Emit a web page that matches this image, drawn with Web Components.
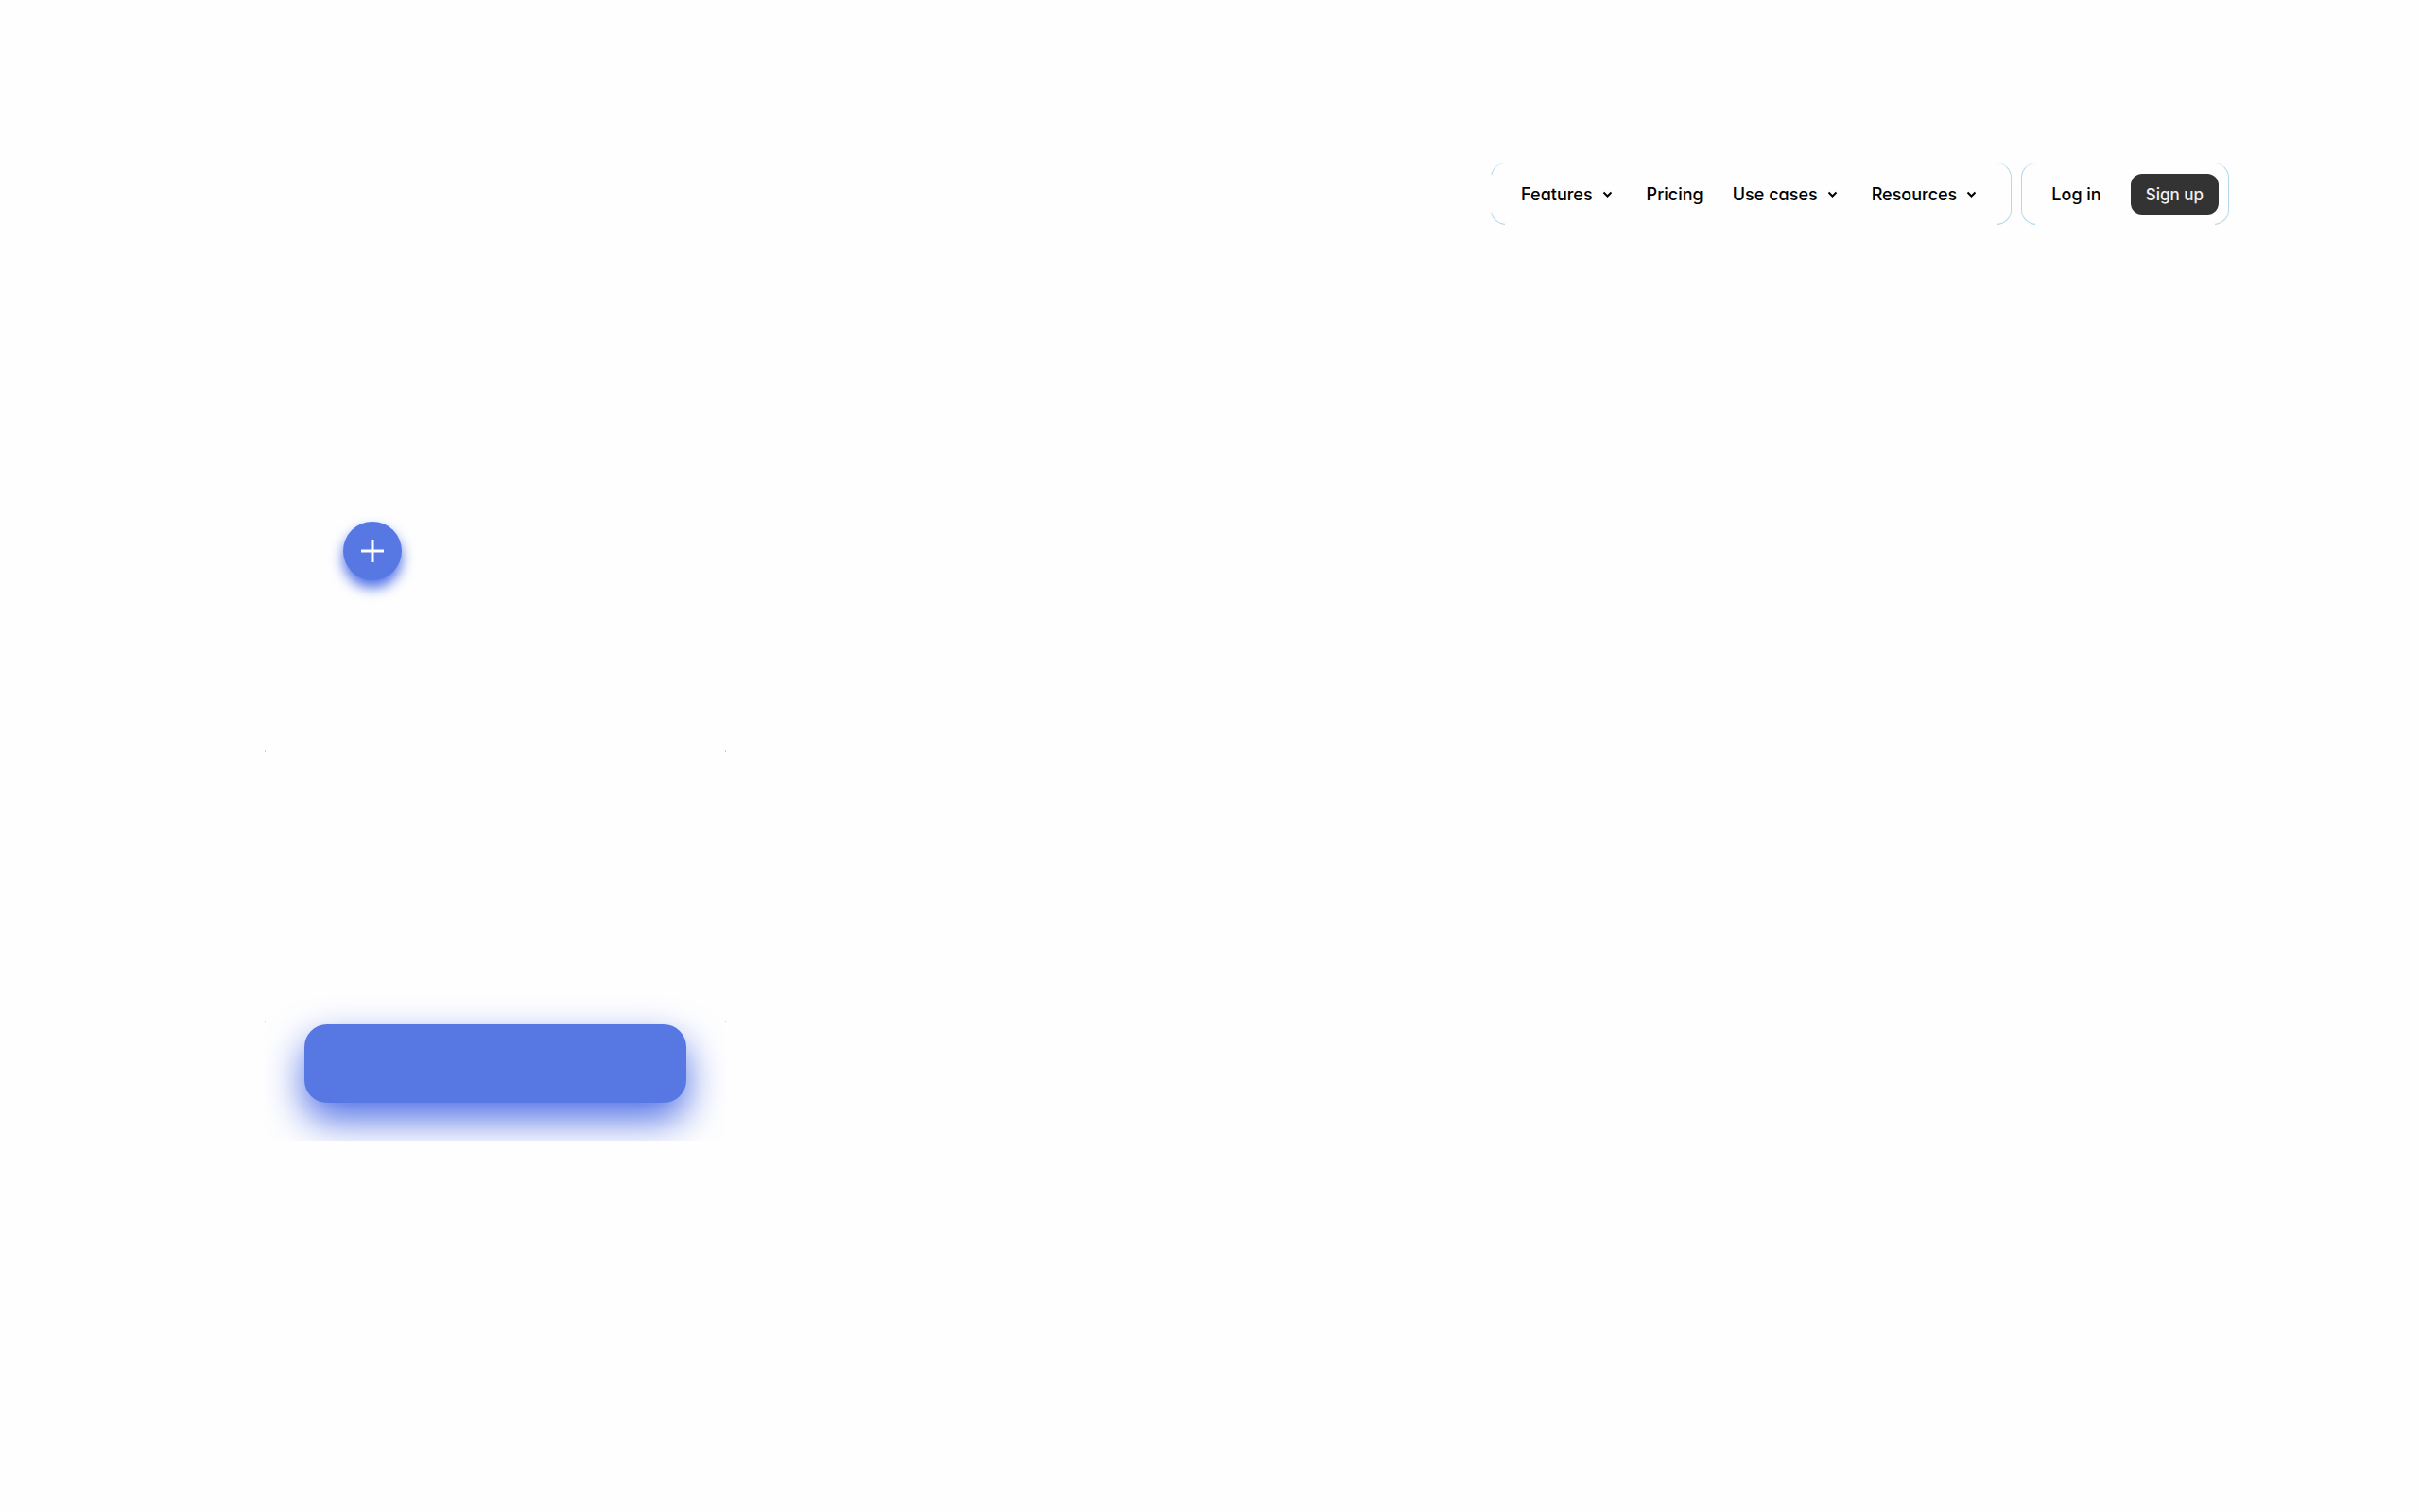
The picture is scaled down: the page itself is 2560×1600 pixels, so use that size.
<!DOCTYPE html>
<html lang="en">
<head>
<meta charset="utf-8">
<title>Home</title>
<style>
    body {
        margin: 0;
        background: #fefefe;
        color: #000;
        font-family: Inter, "Liberation Sans", sans-serif;
        font-size: 18px;
        font-weight: 500;
        line-height: 24px;
        font-feature-settings: "cv11";
    }
</style>
</head>
<body>
<site-header>
    <nav-group class="open-start" aria-label="Main">
        <nav-item menu>Features</nav-item>
        <nav-item>Pricing</nav-item>
        <nav-item menu>Use cases</nav-item>
        <nav-item menu>Resources</nav-item>
    </nav-group>
    <nav-group class="account" aria-label="Account">
        <nav-item>Log in</nav-item>
        <sign-button>Sign up</sign-button>
    </nav-group>
</site-header>
<hero-panel>
    <add-button slot="top"></add-button>
    <action-card></action-card>
</hero-panel>

<script>
class SiteHeader extends HTMLElement {
    constructor() {
        super();
        this.attachShadow({ mode: 'open' });
    }

    connectedCallback() {
        this.shadowRoot.innerHTML = `
            <style>
                :host { display: block; }
                header {
                    display: flex;
                    justify-content: flex-end;
                    gap: 10px;
                    padding: 172px 202px 0;
                }
            </style>
            <header><slot></slot></header>
        `;
    }
}

class NavGroup extends HTMLElement {
    constructor() {
        super();
        this.attachShadow({ mode: 'open' });
    }

    connectedCallback() {
        this.shadowRoot.innerHTML = `
            <style>
                :host { display: block; }
                nav {
                    position: relative;
                    display: flex;
                    align-items: center;
                    gap: 31px;
                    height: 66px;
                    padding: 1px 31px 0;
                    border: 1px solid #b4d8eb;
                    border-top-color: #cdeef0;
                    border-radius: 16px;
                    box-sizing: border-box;
                }
                :host(.account) nav { padding-right: 10px; }
                /* leaves only the rounded ends of the outline */
                nav::before, :host(.open-start) nav::after {
                    content: "";
                    position: absolute;
                    background: #fefefe;
                }
                nav::before { left: 14px; right: 14px; bottom: -1px; height: 1px; }
                :host(.open-start) nav::after { left: -1px; top: 12px; bottom: 12px; width: 1px; }
            </style>
            <nav><slot></slot></nav>
        `;
        this.shadowRoot.querySelector('nav').setAttribute('aria-label', this.getAttribute('aria-label'));
    }
}

class NavItem extends HTMLElement {
    constructor() {
        super();
        this.attachShadow({ mode: 'open' });
    }

    connectedCallback() {
        const arrow = `
            <svg width="20" height="20" viewBox="0 0 20 20" fill="none" stroke="currentColor" stroke-width="2" aria-hidden="true">
                <path d="M5.5 7.5l4 4 4-4"/>
            </svg>`;
        this.shadowRoot.innerHTML = `
            <style>
                :host { display: block; }
                a {
                    display: flex;
                    align-items: center;
                    gap: 6px;
                    color: inherit;
                    text-decoration: none;
                    white-space: nowrap;
                }
            </style>
            <a href="#"><slot></slot>${this.hasAttribute('menu') ? arrow : ''}</a>
        `;
    }
}

class SignButton extends HTMLElement {
    constructor() {
        super();
        this.attachShadow({ mode: 'open' });
    }

    connectedCallback() {
        this.shadowRoot.innerHTML = `
            <style>
                :host { display: block; }
                button {
                    display: block;
                    height: 43px;
                    padding: 0 16px;
                    border: 0;
                    border-radius: 12px;
                    background: #333;
                    color: #f0f0f0;
                    font: inherit;
                    font-size: 17px;
                    font-feature-settings: inherit;
                    white-space: nowrap;
                }
            </style>
            <button type="button"><slot></slot></button>
        `;
    }
}

class HeroPanel extends HTMLElement {
    constructor() {
        super();
        this.attachShadow({ mode: 'open' });
    }

    connectedCallback() {
        this.shadowRoot.innerHTML = `
            <style>
                :host { display: block; }
                main { padding: 314px 280px 0; }
                .top { padding-left: 83px; }
                .body { max-width: 488px; padding-top: 180px; }
            </style>
            <main>
                <div class="top"><slot name="top"></slot></div>
                <div class="body"><slot></slot></div>
            </main>
        `;
    }
}

class AddButton extends HTMLElement {
    constructor() {
        super();
        this.attachShadow({ mode: 'open' });
    }

    connectedCallback() {
        this.shadowRoot.innerHTML = `
            <style>
                :host { display: block; }
                button {
                    display: grid;
                    place-items: center;
                    width: 62px;
                    height: 62px;
                    padding: 0;
                    border: 0;
                    border-radius: 50%;
                    background: #5777e3;
                    box-shadow: 0 8px 14px #4f6fe6;
                    color: #fff;
                }
            </style>
            <button type="button" aria-label="Add">
                <svg width="24" height="24" viewBox="0 0 24 24" stroke="currentColor" stroke-width="3" aria-hidden="true">
                    <path d="M12 0v24M0 12h24"/>
                </svg>
            </button>
        `;
    }
}

class ActionCard extends HTMLElement {
    constructor() {
        super();
        this.attachShadow({ mode: 'open' });
    }

    connectedCallback() {
        this.shadowRoot.innerHTML = `
            <style>
                :host {
                    display: block;
                    overflow: hidden;
                    border-radius: 0 0 16px 16px;
                }
                svg { display: block; }
                .actions { padding: 2px 42px 40px; }
                button {
                    display: block;
                    width: 100%;
                    height: 83px;
                    border: 0;
                    border-radius: 24px;
                    background: #5777e3;
                    box-shadow: 0 18px 40px #4f6fe6;
                }
            </style>
            <svg width="100%" height="288" aria-hidden="true" fill="#ccc">
                <rect width="1" height="2"/>
                <rect x="100%" width="1" height="2" transform="translate(-1 0)"/>
                <rect y="286" width="1" height="2"/>
                <rect x="100%" y="286" width="1" height="2" transform="translate(-1 0)"/>
            </svg>
            <div class="actions"><button type="button" aria-label="Continue"></button></div>
        `;
    }
}

customElements.define('site-header', SiteHeader);
customElements.define('nav-group', NavGroup);
customElements.define('nav-item', NavItem);
customElements.define('sign-button', SignButton);
customElements.define('hero-panel', HeroPanel);
customElements.define('add-button', AddButton);
customElements.define('action-card', ActionCard);
</script>
</body>
</html>
